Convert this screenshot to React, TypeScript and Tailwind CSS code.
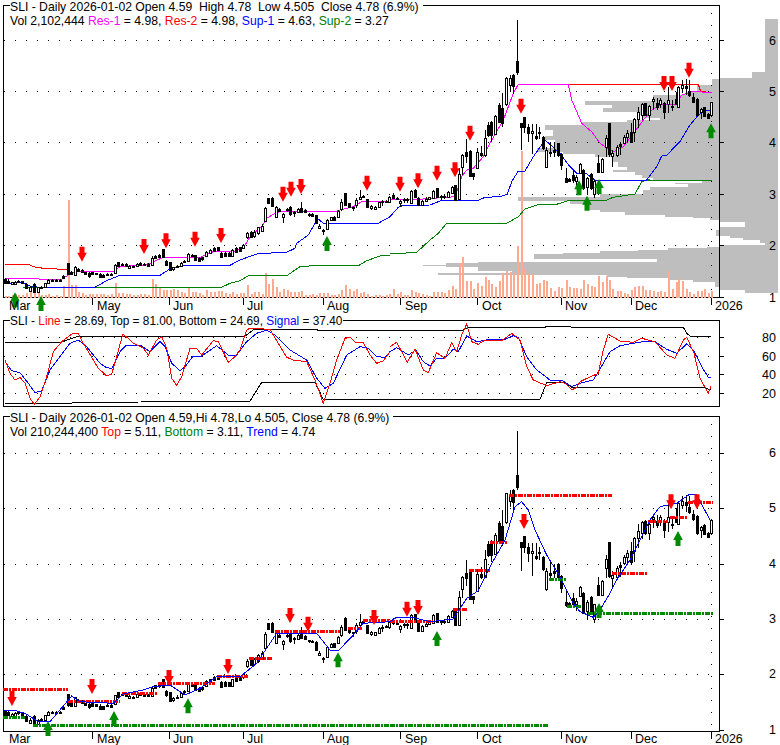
type Candle = [number, number, number, number, number, number, number]

// x, wick top, body top, body bottom, wick bottom, filled, volume height
const leftCandles: Candle[] = [
    [15,835,838,848,850,1,2],[25,838,842,850,852,1,2],[35,845,847,852,854,0,3],[45,842,845,852,855,0,4],[55,840,842,845,848,1,3],[65,842,844,848,850,1,3],[78,850,852,865,868,1,5],[90,858,862,872,875,0,7],[103,850,852,875,877,1,6],[113,860,862,875,878,0,5],[124,858,860,862,865,1,3],[135,848,850,862,864,0,3],[145,838,840,848,850,0,4],[157,838,840,844,846,1,2],[168,838,840,843,845,1,3],[179,838,840,842,844,1,2],[190,825,828,833,836,1,12],[203,790,790,822,826,1,98],[212,812,815,823,826,1,13],[224,798,800,825,828,0,13],[235,805,808,812,815,1,6],[245,808,810,815,820,1,5],[256,815,817,822,825,1,3],[267,815,818,828,833,1,4],[277,815,817,823,826,1,4],[289,818,820,823,825,1,4],[300,820,823,832,835,1,4],[310,823,825,832,835,1,4],[321,820,822,825,826,0,3],[332,820,822,826,828,1,4],[344,793,795,818,820,0,15],[355,785,785,798,800,1,5],[366,790,792,795,797,1,5],[377,790,792,797,799,1,4],[388,795,797,803,805,0,4],[399,796,798,800,802,0,3],[410,790,792,798,800,0,3],[421,786,788,794,796,1,4],[432,790,792,796,798,1,4],[443,790,792,797,800,1,3],[455,768,775,796,798,0,19],[466,765,767,773,775,1,14],[477,762,765,770,775,1,10],[488,748,748,772,775,1,8],[499,780,783,795,798,1,8],[509,785,785,810,812,1,8],[520,800,802,808,812,0,9],[531,795,798,800,802,1,8],[542,786,788,798,802,0,6],[553,780,782,785,790,0,5],[565,760,762,782,784,0,10],[575,762,764,768,772,1,6],[586,764,766,780,783,1,6],[597,772,774,782,786,1,5],[607,770,772,778,782,1,3],[619,752,755,768,770,0,8],[631,748,750,758,760,0,6],[642,742,744,752,755,1,6],[653,740,742,750,752,1,7],[664,755,758,772,775,1,7],[675,755,758,768,770,1,5],[686,757,758,768,770,1,4],[697,748,750,768,770,0,6],[708,742,744,755,757,1,4],[720,740,742,752,755,1,5],[730,733,735,745,748,0,5],[740,695,700,712,718,0,13],[752,692,697,710,712,1,4],[762,690,695,708,713,0,6],[773,680,682,700,705,0,6],[785,672,677,693,697,0,4],[794,620,623,662,665,0,25],[805,593,595,610,613,1,14],[817,592,595,618,622,1,19],[827,618,620,650,653,0,11],[838,625,627,633,636,1,6],[850,640,643,652,668,0,9],[860,625,627,630,636,1,8],[871,618,621,643,648,1,6],[882,632,635,638,652,0,6],[893,625,627,637,640,0,6],[904,605,625,635,637,1,7],[915,628,630,637,640,1,3],[926,640,642,645,650,1,3],[937,640,643,647,650,1,4],[947,645,646,668,670,1,3],[958,672,678,684,686,0,5],[970,688,690,692,705,1,5],[982,658,660,688,690,0,5],[992,650,652,660,662,0,3],[1003,648,650,660,662,1,3],[1015,630,632,650,653,0,4],[1024,598,605,628,632,0,8],[1036,578,580,614,616,1,13],[1047,608,610,620,625,1,9],[1058,618,620,622,632,0,7],[1069,595,600,616,625,0,9],[1081,570,590,598,600,0,5],[1090,585,587,592,595,0,6],[1101,598,598,622,625,1,4],[1113,615,618,625,630,0,2],[1124,618,620,626,630,0,3],[1136,605,607,622,625,0,3],[1147,600,604,607,618,0,2],[1158,600,603,605,608,1,3],[1168,588,590,605,610,0,4],
]

const rightCandles: Candle[] = [
    [10,580,585,595,598,1,9],[20,592,594,597,600,1,4],[31,600,603,610,622,0,6],[41,595,597,599,608,1,3],[52,595,597,598,610,1,3],[64,570,572,608,610,0,8],[75,568,570,590,592,1,6],[85,592,594,615,617,1,5],[97,600,603,615,617,0,4],[108,592,596,603,605,0,3],[118,590,592,596,600,0,2],[130,570,572,595,597,0,6],[141,565,565,592,595,1,6],[152,585,587,592,600,1,6],[163,585,587,592,596,1,5],[175,572,575,592,594,0,8],[185,558,560,578,580,0,12],[196,555,555,600,602,1,9],[207,505,522,598,600,0,35],[217,462,465,500,525,0,41],[229,418,455,468,490,1,17],[241,450,452,527,530,1,17],[250,518,520,527,540,1,9],[262,445,457,505,508,0,15],[273,438,458,465,472,1,12],[284,390,415,465,470,0,21],[295,365,375,405,410,1,18],[304,362,367,405,425,1,14],[316,345,348,402,405,0,11],[327,310,315,365,368,1,17],[337,280,325,368,380,1,24],[348,232,234,312,318,0,27],[360,225,235,255,272,0,26],[370,222,225,258,282,1,25],[382,60,183,215,225,1,52],[394,368,368,382,450,1,147],[403,352,352,382,398,1,29],[415,372,382,398,425,1,24],[427,372,393,398,462,0,24],[437,372,407,413,420,1,14],[448,382,396,400,418,1,15],[460,408,410,445,450,1,18],[469,440,450,500,505,0,17],[481,425,455,460,470,1,10],[492,430,450,455,470,1,7],[503,428,430,465,470,1,11],[514,460,462,496,510,1,10],[527,505,535,545,550,1,18],[537,535,537,542,545,1,11],[548,510,525,540,548,1,10],[559,525,532,542,560,0,10],[569,490,493,520,522,0,9],[580,508,510,565,570,1,18],[591,530,535,560,585,0,14],[602,520,522,565,570,1,12],[613,540,542,582,595,0,11],[625,465,488,515,517,1,22],[635,475,478,515,520,0,16],[647,405,415,442,470,0,22],[658,370,370,462,470,1,18],[667,450,460,468,500,0,9],[680,435,440,465,470,0,7],[691,425,432,437,465,1,7],[701,405,410,428,432,0,5],[712,390,400,410,430,0,4],[724,370,395,425,430,1,8],[733,355,358,395,425,0,11],[745,320,337,357,385,0,12],[757,310,312,345,360,0,12],[766,308,310,345,348,1,8],[778,315,318,345,362,0,8],[789,290,298,304,330,0,7],[800,295,310,322,330,1,6],[811,295,300,312,325,0,7],[823,305,310,335,357,1,6],[833,260,300,312,340,0,27],[845,300,318,322,332,1,9],[857,275,298,312,315,1,16],[864,258,260,320,322,0,20],[876,240,255,265,278,0,17],[887,238,258,265,285,1,9],[898,240,272,285,290,1,6],[910,280,290,305,310,1,4],[921,295,297,345,350,1,7],[932,325,327,335,357,0,7],[943,320,322,347,350,1,9],[955,340,343,355,358,1,5],[964,305,307,345,350,0,7],
]

// candle x and y in page pixels (panel 1 scale)
const candles = [
    ...leftCandles.map((c) => [c[0] / 3, c[1] / 3, c[2] / 3, c[3] / 3, c[4] / 3, c[5], c[6]]),
    ...rightCandles.map((c) => [390 + c[0] / 3, c[1] / 3, c[2] / 3, c[3] / 3, c[4] / 3, c[5], c[6]]),
]

const toLower = (y: number) => 730 - (297 - y) * 1.08

// volume at price rows: start y, left x
const profile: [number, number][] = [
    [19,765],[72,752],[78,720],[79,712],[85,697],[92,687],[95,653],[101,585],[105,612],[108,603],[112,640],[115,643],[118,660],[120,627],[122,582],[125,545],[130,553],[136,545],[140,555],[148,537],[152,563],[154,595],[157,612],[162,618],[167,627],[170,613],[172,635],[175,642],[178,653],[180,702],[183,675],[184,688],[187,650],[190,643],[194,600],[197,518],[201,570],[204,585],[210,600],[212,625],[215,665],[217,693],[218,710],[220,720],[222,745],[227,720],[230,716],[236,730],[238,743],[240,760],[243,765],[245,720],[247,707],[248,668],[250,638],[251,600],[253,563],[254,534],[259,657],[262,478],[263,446],[265,423],[266,446],[267,478],[271,512],[273,438],[275,607],[277,627],[278,668],[280,693],[282,715],[287,720],[290,745],[293,778],
]

const line = (arr: number[], dx: number, dy: number) => {
    const out: string[] = []
    for (let i = 0; i < arr.length; i += 2) {
        out.push(`${(dx + arr[i] / 3).toFixed(1)},${(dy + arr[i + 1] / 3).toFixed(1)}`)
    }
    return out.join(' ')
}

const ticksLeft = [277, 508, 730, 970]
const ticksRight = [31, 262, 514, 724, 964]
const tickX = [...ticksLeft.map((x) => x / 3), ...ticksRight.map((x) => 390 + x / 3)]
const months: [string, number][] = [['Mar', 9], ['May', 97], ['Jun', 173], ['Jul', 247], ['Aug', 327], ['Sep', 405], ['Oct', 482], ['Nov', 565], ['Dec', 635], ['2026', 715]]

function Arrow({ x, y, up, color }: { x: number; y: number; up?: boolean; color: string }) {
    const d = up ? 1 : -1
    const X = Math.round(x)
    const p = [
        [X, y],
        [X + 4.8, y + 9 * d],
        [X + 2.5, y + 9 * d],
        [X + 2.5, y + 15 * d],
        [X - 2.5, y + 15 * d],
        [X - 2.5, y + 9 * d],
        [X - 4.8, y + 9 * d],
    ]
    return <polygon points={p.map((q) => q.join(',')).join(' ')} fill={color} />
}

function Candles({ map }: { map: (y: number) => number }) {
    return (
        <g shapeRendering="crispEdges">
            {candles.map((c, i) => {
                const X = Math.round(c[0]) + 0.5
                const top = Math.round(map(c[2])) + 0.5
                const bot = Math.round(map(c[3])) + 0.5
                return (
                    <g key={i}>
                        <line x1={X} x2={X} y1={map(c[1])} y2={map(c[4])} stroke="#000" />
                        <rect x={X - 1} y={top} width={2} height={Math.max(bot - top, 1)} fill={c[5] ? '#000' : '#fff'} stroke="#000" />
                    </g>
                )
            })}
        </g>
    )
}

function DotRow({ y }: { y: number }) {
    return <line x1={4} x2={712} y1={y + 0.5} y2={y + 0.5} stroke="#000" strokeDasharray="1 10" shapeRendering="crispEdges" />
}

function Frame({ top, bottom }: { top: number; bottom: number }) {
    return <rect x={3.5} y={top + 0.5} width={716} height={bottom - top} fill="none" stroke="#000" shapeRendering="crispEdges" />
}

function Label({ x, y, children }: { x: number; y: number; children: string }) {
    return <text x={x} y={y} fontSize={12.5} fill="#000">{children}</text>
}

const Red = ({ children }: { children: string }) => <span className="text-[#ff0000]">{children}</span>
const Blue = ({ children }: { children: string }) => <span className="text-[#0000ff]">{children}</span>
const Green = ({ children }: { children: string }) => <span className="text-[#008000]">{children}</span>
const Pink = ({ children }: { children: string }) => <span className="text-[#ff00ff]">{children}</span>

const redUp: [number, number, number][] = [
    [0,245,785],[0,433,762],[0,499,745],[0,586,740],[0,664,729],[0,850,605],[0,872,590],[0,904,582],[0,1102,572],
    [1,31,575],[1,85,565],[1,142,542],[1,195,532],[1,241,422],[1,394,341],[1,822,273],[1,845,273],[1,898,233],
]
const greenUp: [number, number, number][] = [
    [0,45,877],[0,124,888],[0,982,708],[1,568,541],[1,591,587],[1,626,537],[1,963,370],
]
const redLow: [number, number, number][] = [
    [0,37,858],[0,277,822],[0,508,795],[0,685,762],[0,871,609],[0,925,635],[0,1123,615],
    [1,52,590],[1,85,585],[1,403,327],[1,843,268],[1,921,268],
]
const greenLow: [number, number, number][] = [
    [0,145,903],[0,343,873],[0,565,835],[0,1015,697],[1,142,633],[1,626,549],[1,865,333],
]
const redDash: [number, number, number, number][] = [
    [0,10,205,807],[0,205,360,843],[0,365,470,820],[0,475,645,790],[0,650,745,767],[0,748,820,715],[0,825,1020,634],[0,1045,1085,625],[0,1090,1170,601],
    [1,0,130,604],[1,190,235,568],[1,237,300,451],[1,300,355,367],[1,358,665,226],[1,665,770,460],[1,775,835,304],[1,840,895,292],[1,893,970,247],
]
const greenDash: [number, number, number, number][] = [
    [0,10,75,892],[0,100,1170,916],[1,0,475,916],[1,477,530,478],[1,530,575,559],[1,595,970,580],
]

function Dash({ seg, color }: { seg: [number, number, number, number]; color: string }) {
    const dx = seg[0] ? 390 : 0
    const y = Math.round(420 + seg[3] / 3) + 0.5
    return <line x1={dx + seg[1] / 3} x2={dx + seg[2] / 3} y1={y} y2={y} stroke={color} strokeWidth={3} strokeDasharray="5 1 2 1" shapeRendering="crispEdges" />
}

function Panel({ top, height, children, title }: { top: number; height: number; children: React.ReactNode; title: React.ReactNode }) {
    return (
        <section className="relative w-full" style={{ height }}>
            <svg width={780} height={height} viewBox={`0 ${top} 780 ${height}`} className="block">
                {children}
            </svg>
            {title}
        </section>
    )
}

function PriceChart() {
    return (
        <Panel
            top={0}
            height={316}
            title={
                <div className="absolute left-[10px] top-0 text-[12.2px] leading-[14px] text-black whitespace-pre">
                    <div className="w-fit bg-white pr-[4px]">SLI - Daily 2026-01-02 Open 4.59  High 4.78  Low 4.505  Close 4.78 (6.9%)</div>
                    <div className="w-fit">
                        Vol 2,102,444 <Pink>Res-1</Pink> = 4.98, <Red>Res-2</Red> = 4.98, <Blue>Sup-1</Blue> = 4.63, <Green>Sup-2</Green> = 3.27
                    </div>
                </div>
            }
        >
            <g shapeRendering="crispEdges" fill="#bebebe">
                {profile.map((r, i) => {
                    const end = i + 1 < profile.length ? profile[i + 1][0] : 293
                    return <rect key={i} x={r[1]} y={r[0]} width={778 - r[1]} height={end - r[0]} />
                })}
            </g>
            <Frame top={5} bottom={297} />
            {[40, 91, 142, 194, 245].map((y) => <DotRow key={y} y={y} />)}
            <line x1={711.5} x2={711.5} y1={13} y2={297} stroke="#000" strokeDasharray="1 11" shapeRendering="crispEdges" />
            <g shapeRendering="crispEdges" fill="#ffa98f">
                {candles.map((c, i) => (
                    <rect key={i} x={Math.round(c[0])} y={298 - c[6]} width={2} height={c[6]} />
                ))}
            </g>
            <g fill="none" shapeRendering="crispEdges">
                <polyline stroke="#ff0000" points={line([15,793,85,793,100,800,130,805,190,808,205,808], 0, 0)} />
                <polyline stroke="#ff0000" points={line([535,253,925,253,932,275,965,277], 390, 0)} />
                <polyline stroke="#008000" points={line([15,850,70,848], 0, 0)} />
                <polyline stroke="#008000" points={line([70,862,665,862,690,850,720,842,745,827,860,827,900,800,940,797,1075,797,1100,782,1140,768,1170,765], 0, 0)} />
                <polyline stroke="#008000" points={line([0,762,80,757,120,720,145,700,170,670,350,670,385,650,405,627,440,615,500,613,540,600,650,600,670,592,735,582,755,545,770,540,965,541], 390, 0)} />
                <polyline stroke="#0000ff" points={line([15,850,70,848,95,860,125,862,285,862,320,842,355,828,480,826,505,810,530,800,560,796,690,796,720,780,770,762,795,760,860,757,885,745,890,730,925,705,945,670,955,657,970,670,1135,670,1170,650], 0, 0)} />
                <polyline stroke="#0000ff" points={line([0,650,25,622,40,616,120,615,155,601,265,601,285,592,330,590,352,583,365,545,385,513,405,513,430,470,465,420,510,460,540,500,560,520,590,522,615,540,770,540,800,500,815,468,830,466,845,450,870,425,885,400,900,375,925,345,945,332,965,332], 390, 0)} />
                <polyline stroke="#ff00ff" points={line([15,835,95,835,125,838,185,838,205,825,225,815,340,815,360,800,430,795,450,790,490,772,600,772,640,755,700,755,730,745,750,710,785,680,800,655,825,640,840,635,1005,635,1020,630,1060,620,1085,605,1170,605], 0, 0)} />
                <polyline stroke="#ff00ff" points={line([0,597,100,597,195,590,215,530,230,510,250,505,280,470,300,430,340,360,370,280,385,253,535,253,545,300,575,370,605,395,630,430,645,440,670,455,700,440,730,400,760,360,785,330,810,315,860,312,875,285,905,275,965,277], 390, 0)} />
            </g>
            <Candles map={(y) => y} />
            {redUp.map((a, i) => <Arrow key={i} x={(a[0] ? 390 : 0) + a[1] / 3} y={a[2] / 3} color="#ff0000" />)}
            {greenUp.map((a, i) => <Arrow key={i} x={(a[0] ? 390 : 0) + a[1] / 3} y={a[2] / 3} up color="#008a00" />)}
            <g shapeRendering="crispEdges" stroke="#000">
                {[40, 91, 142, 194, 245, 297].map((y) => <line key={y} x1={720} x2={724} y1={y + 0.5} y2={y + 0.5} />)}
                {tickX.map((x) => <line key={x} x1={Math.round(x) + 0.5} x2={Math.round(x) + 0.5} y1={298} y2={305} />)}
            </g>
            {months.map((m) => <Label key={m[0]} x={m[1]} y={310}>{m[0]}</Label>)}
            {[6, 5, 4, 3, 2, 1].map((n, i) => <Label key={n} x={769} y={[45, 96, 147, 199, 250, 302][i]}>{String(n)}</Label>)}
        </Panel>
    )
}

function OscChart() {
    return (
        <Panel
            top={316}
            height={96}
            title={
                <div className="absolute left-[10px] top-[-2px] w-fit bg-white pr-[1px] text-[11.85px] leading-[14px] text-black whitespace-pre">
                    SLI - <Red>Line</Red> = 28.69, Top = 81.00, Bottom = 24.69, <Blue>Signal</Blue> = 37.40
                </div>
            }
        >
            <Frame top={320} bottom={406} />
            {[337, 356, 374, 393].map((y) => <DotRow key={y} y={y} />)}
            <g fill="none" shapeRendering="crispEdges">
                <polyline stroke="#000" points={line([15,128,180,128,215,115,240,108,735,108,760,90,775,87,950,88,955,92,1170,92], 0, 300)} />
                <polyline stroke="#000" points={line([0,92,215,92,235,82,465,82,470,78,540,78,545,82,880,82,890,100,900,108,962,110], 390, 300)} />
                <polyline stroke="#000" points={line([15,311,215,310,218,307,425,306,428,303,750,303,785,247,945,247,970,298,1170,298], 0, 300)} />
                <polyline stroke="#000" points={line([0,298,450,298,470,247,525,247,545,262,940,262,962,270], 390, 300)} />
                <polyline stroke="#0000ff" points={line([15,185,35,212,60,218,85,250,105,278,125,272,150,210,180,170,210,130,235,120,260,140,300,190,320,203,335,205,360,155,380,135,420,135,450,155,480,125,495,140,515,190,540,212,555,200,580,168,605,168,650,137,685,165,710,165,740,125,770,100,800,90,825,105,870,150,920,180,950,235,975,265,1000,250,1040,165,1080,140,1105,145,1130,170,1155,172,1170,155], 0, 300)} />
                <polyline stroke="#0000ff" points={line([0,155,20,143,40,155,55,165,77,150,100,185,120,198,140,175,165,175,190,148,205,155,230,108,260,125,300,118,340,120,370,107,385,112,410,170,440,210,480,240,520,243,545,260,570,250,610,240,640,190,660,155,690,137,730,130,770,123,795,125,830,148,860,160,890,132,910,150,935,200,955,232,963,233], 390, 300)} />
                <polyline stroke="#ff0000" points={line([15,180,30,220,45,240,60,232,75,250,90,295,103,313,120,290,140,230,160,155,185,125,215,102,235,100,250,130,280,180,295,205,320,228,335,222,350,170,368,103,385,115,400,130,430,145,445,165,470,120,485,110,500,145,515,235,530,256,545,230,570,145,590,145,605,165,640,122,655,125,685,187,705,170,720,150,740,90,750,85,810,88,835,130,860,172,880,180,920,185,945,240,970,310,990,250,1010,180,1035,115,1050,112,1065,127,1090,128,1110,165,1130,190,1150,183,1170,155], 0, 300)} />
                <polyline stroke="#ff0000" points={line([0,140,20,127,35,155,52,187,75,147,100,210,115,218,140,158,165,175,185,128,200,155,215,105,230,72,245,125,265,133,285,120,335,122,365,100,390,120,410,200,430,240,470,257,510,245,525,250,545,270,560,262,570,245,595,233,625,220,640,150,655,103,690,123,730,127,755,115,795,125,830,165,855,175,880,120,890,112,912,160,930,235,955,280,963,258], 390, 300)} />
            </g>
            <g shapeRendering="crispEdges" stroke="#000">
                {[337, 356, 374, 393].map((y) => <line key={y} x1={720} x2={724} y1={y + 0.5} y2={y + 0.5} />)}
            </g>
            {['80', '60', '40', '20'].map((n, i) => <Label key={n} x={762} y={[342, 361, 379, 398][i]}>{n}</Label>)}
        </Panel>
    )
}

function TrendChart() {
    return (
        <Panel
            top={412}
            height={333}
            title={
                <div className="absolute left-[10px] top-[-1px] text-[12.2px] leading-[14px] text-black whitespace-pre">
                    <div className="w-fit bg-white pr-[4px]">SLI - Daily 2026-01-02 Open 4.59,Hi 4.78,Lo 4.505, Close 4.78 (6.9%)</div>
                    <div className="w-fit">
                        Vol 210,244,400 <Red>Top</Red> = 5.11, <Green>Bottom</Green> = 3.11, <Blue>Trend</Blue> = 4.74
                    </div>
                </div>
            }
        >
            <Frame top={416} bottom={731} />
            {[453, 508, 564, 619, 674].map((y) => <DotRow key={y} y={y} />)}
            <line x1={711.5} x2={711.5} y1={424} y2={731} stroke="#000" strokeDasharray="1 11" shapeRendering="crispEdges" />
            <Candles map={toLower} />
            {redDash.map((s, i) => <Dash key={i} seg={s} color="#ff0000" />)}
            {greenDash.map((s, i) => <Dash key={i} seg={s} color="#008a00" />)}
            <g fill="none" shapeRendering="crispEdges">
                <polyline stroke="#0000ff" points={line([12,870,50,873,75,880,115,905,150,905,215,828,240,845,340,850,370,822,430,810,460,800,510,795,555,825,600,805,650,770,720,770,770,730,830,640,950,640,990,690,1015,692,1060,645,1090,610,1170,605], 0, 420)} />
                <polyline stroke="#0000ff" points={line([0,605,20,592,70,593,120,605,190,597,230,535,265,512,300,440,345,360,375,260,395,245,415,270,435,330,470,405,510,470,550,550,570,575,610,592,630,570,660,520,680,480,720,420,780,300,810,260,860,250,900,222,920,225,960,300], 390, 420)} />
            </g>
            {redLow.map((a, i) => <Arrow key={i} x={(a[0] ? 390 : 0) + a[1] / 3} y={420 + a[2] / 3} color="#ff0000" />)}
            {greenLow.map((a, i) => <Arrow key={i} x={(a[0] ? 390 : 0) + a[1] / 3} y={420 + a[2] / 3} up color="#008a00" />)}
            <g shapeRendering="crispEdges" stroke="#000">
                {[453, 508, 564, 619, 674, 730].map((y) => <line key={y} x1={720} x2={724} y1={y + 0.5} y2={y + 0.5} />)}
                {tickX.map((x) => <line key={x} x1={Math.round(x) + 0.5} x2={Math.round(x) + 0.5} y1={732} y2={739} />)}
            </g>
            {months.map((m) => <Label key={m[0]} x={m[1]} y={743}>{m[0]}</Label>)}
            {[6, 5, 4, 3, 2, 1].map((n, i) => <Label key={n} x={769} y={[457, 512, 568, 623, 678, 734][i]}>{String(n)}</Label>)}
        </Panel>
    )
}

export default function App() {
    return (
        <main className="flex h-[745px] w-[780px] flex-col overflow-hidden bg-white font-['Liberation_Sans',Arial,sans-serif]">
            <PriceChart />
            <OscChart />
            <TrendChart />
        </main>
    )
}
